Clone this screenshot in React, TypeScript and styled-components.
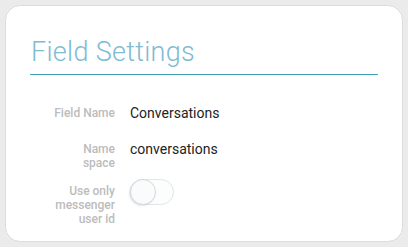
import styled, { createGlobalStyle } from 'styled-components';

const GlobalStyle = createGlobalStyle`
  html, body {
    margin: 0;
    padding: 0;
    background: #ebebeb;
    font-family: Roboto, "Liberation Sans", sans-serif;
  }
  * { box-sizing: border-box; }
`;

const Page = styled.div`
  padding: 5px;
`;

const Card = styled.div`
  background: #fff;
  border: 1px solid #dcdcdc;
  border-radius: 15px;
  height: 237px;
  padding: 30px 24px 0 24px;
`;

const Title = styled.h2`
  margin: 0 0 28px 0;
  font-weight: 300;
  font-size: 27px;
  letter-spacing: 0.3px;
  line-height: 32px;
  color: #80bbd3;
  padding: 0 0 6px 1px;
  border-bottom: 1px solid #3f9fb6;
`;

const Row = styled.div`
  display: grid;
  grid-template-columns: 85px 1fr;
  column-gap: 15px;
  align-items: start;
  min-height: 36px;
  padding-bottom: 11px;
`;

const Label = styled.div`
  padding-top: 3px;
  text-align: right;
  font-size: 12px;
  line-height: 14px;
  font-weight: 500;
  color: #bcbcbc;
`;

const Value = styled.div`
  font-size: 14px;
  line-height: 20px;
  color: #222;
`;

const Track = styled.div<{ $on?: boolean }>`
  position: relative;
  margin-top: -2px;
  width: 44px;
  height: 26px;
  border-radius: 13px;
  border: 1px solid #e4e4e4;
  background: ${(p) => (p.$on ? '#3f9fb6' : '#fcfdfd')};
`;

const Knob = styled.div<{ $on?: boolean }>`
  position: absolute;
  top: -1px;
  left: ${(p) => (p.$on ? '17px' : '-1px')};
  width: 26px;
  height: 26px;
  border-radius: 50%;
  background: #f9fbfc;
  border: 1px solid #d8d8d8;
  box-shadow: -1px 1px 2px rgba(0, 0, 0, 0.1);
`;

export default function App() {
  return (
    <>
      <GlobalStyle />
      <Page>
        <Card>
          <Title>Field Settings</Title>
          <Row>
            <Label>Field Name</Label>
            <Value>Conversations</Value>
          </Row>
          <Row>
            <Label>Name<br />space</Label>
            <Value>conversations</Value>
          </Row>
          <Row>
            <Label>Use only<br />messenger<br />user id</Label>
            <Track>
              <Knob />
            </Track>
          </Row>
        </Card>
      </Page>
    </>
  );
}
